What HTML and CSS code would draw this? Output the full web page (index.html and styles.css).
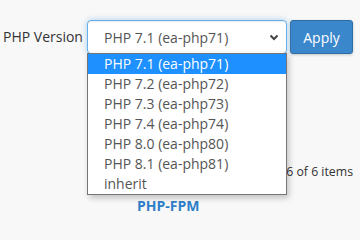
FILE: index.html
```html
<!DOCTYPE html>
<html lang="en">
<head>
<meta charset="utf-8">
<title>PHP Version</title>
<link rel="stylesheet" href="styles.css">
</head>
<body>
<div class="page">
  <form class="version-form">
    <label class="version-label">PHP Version</label>
    <div class="select-wrap">
      <div class="select-box">
        <span class="select-value">PHP 7.1 (ea-php71)</span>
        <svg class="chevron" width="10" height="7" viewBox="0 0 10 7"><path d="M1.5 1.5 L5 5 L8.5 1.5" fill="none" stroke="#444" stroke-width="2"/></svg>
      </div>
      <ul class="select-list">
        <li class="option selected">PHP 7.1 (ea-php71)</li>
        <li class="option">PHP 7.2 (ea-php72)</li>
        <li class="option">PHP 7.3 (ea-php73)</li>
        <li class="option">PHP 7.4 (ea-php74)</li>
        <li class="option">PHP 8.0 (ea-php80)</li>
        <li class="option">PHP 8.1 (ea-php81)</li>
        <li class="option">inherit</li>
      </ul>
    </div>
    <button type="button" class="btn-apply">Apply</button>
  </form>
  <div class="items-row"><span class="items-text">Showing 1 - 6 of 6 items</span></div>
  <div class="col-head">PHP-FPM</div>
</div>
</body>
</html>
```

FILE: styles.css
```css
html, body {
  margin: 0;
  padding: 0;
  background: #f8f8f8;
}
body {
  font-family: "Open Sans", "Liberation Sans", sans-serif;
  font-size: 14px;
  color: #333;
  overflow: hidden;
}
.page {
  padding: 20px 7px 0 3px;
}
.version-form {
  display: flex;
  align-items: center;
  margin: 0;
}
.version-label {
  width: 84px;
  line-height: 20px;
  color: #333;
}
.select-wrap {
  position: relative;
  width: 200px;
}
.select-box {
  box-sizing: border-box;
  height: 34px;
  border: 1px solid #66afe9;
  border-radius: 4px;
  background: #fff;
  box-shadow: inset 0 1px 1px rgba(0,0,0,.075), 0 0 6px rgba(102,175,233,.55);
  display: flex;
  align-items: center;
  justify-content: space-between;
  padding: 0 7px 0 16px;
  color: #555;
}
.chevron {
  display: block;
}
.select-list {
  position: absolute;
  left: 0;
  top: 33px;
  width: 200px;
  box-sizing: border-box;
  margin: 0;
  padding: 0;
  list-style: none;
  background: #fff;
  border: 1px solid #767676;
  box-shadow: 2px 3px 6px rgba(0,0,0,.22);
  z-index: 5;
}
.option {
  height: 20px;
  line-height: 20px;
  padding-left: 16px;
  color: #555;
}
.option.selected {
  background: #1e90ff;
  color: #fff;
}
.btn-apply {
  margin-left: 3px;
  width: 63px;
  height: 34px;
  box-sizing: border-box;
  border: 1px solid #2e6da4;
  border-radius: 3px;
  background: #3a87cc;
  color: #fff;
  font-family: inherit;
  font-size: 14px;
  padding: 0;
  box-shadow: 0 1px 3px rgba(0,0,0,.2);
}
.items-row {
  margin-top: 107px;
  line-height: 20px;
  text-align: right;
  color: #333;
}
.items-text {
  font-size: 12.3px;
}
.col-head {
  margin-top: 14px;
  padding-left: 134px;
  line-height: 20px;
  font-weight: 700;
  color: #2f7fc9;
}
```
